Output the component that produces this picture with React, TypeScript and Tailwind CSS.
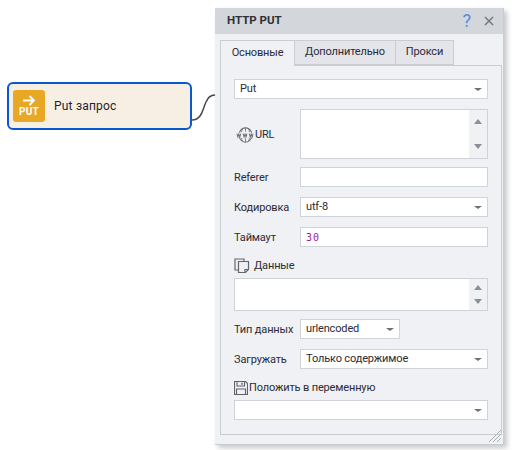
import type { ReactNode } from 'react';

const BOX_CLS = 'bg-white border border-[#cfd2d8] h-[20px] text-[11px] tracking-[-0.15px] text-[#2b2b33] flex items-center pl-[5px] pr-[5px]';
const LABEL_CLS = 'w-[66px] pt-[2px] text-[11px] tracking-[-0.15px] text-[#2b2b33] shrink-0 whitespace-nowrap';
const TAB_CLS = 'text-[11px] tracking-[-0.15px] text-[#2b2b33] flex items-center justify-center border-[#c9ccd2]';

function Caret() {
  return <span className="ml-auto w-0 h-0 border-x-[4px] border-x-transparent border-t-[3px] border-t-[#6e7078]" />;
}

function Select({ value, className = '' }: { value?: string; className?: string }) {
  return (
    <div className={`${BOX_CLS} ${className}`}>
      <span>{value}</span>
      <Caret />
    </div>
  );
}

function ScrollArea({ className = '', gap }: { className?: string; gap: string }) {
  return (
    <div className={`bg-white border border-[#cfd2d8] flex justify-end ${className}`}>
      <div className={`w-[18px] bg-[#f0f1f3] flex flex-col items-center justify-between ${gap}`}>
        <span className="w-0 h-0 border-x-[4px] border-x-transparent border-b-[5px] border-b-[#8d8f96]" />
        <span className="w-0 h-0 border-x-[4px] border-x-transparent border-t-[5px] border-t-[#8d8f96]" />
      </div>
    </div>
  );
}

function Row({ label, children, className = '' }: { label: string; children: ReactNode; className?: string }) {
  return (
    <div className={`flex items-center ${className}`}>
      <span className={LABEL_CLS}>{label}</span>
      {children}
    </div>
  );
}

function WwwIcon() {
  return (
    <svg width="19" height="18" viewBox="0 0 20 18" fill="none" stroke="#6f7278" className="shrink-0">
      <path d="M3.500 6.500C5 3 7.500 1.500 10 1.500s5 1.500 6.500 5M3.500 11.500C5 15 7.500 16.500 10 16.500s5-1.500 6.500-5" strokeWidth="1.200" />
      <path d="M10 1.500v4M10 12.500v4M7 2.500C6.300 3.500 6 4.500 5.800 6M13 2.500c.7 1 1 2 1.200 3.500M7 15.500c-.7-1-1-2-1.200-3.500M13 15.500c.7-1 1-2 1.200-3.500" strokeWidth="0.900" />
      <path d="M1 7.500l1 3.500 1-3 1 3 1-3.500M7.500 7.500l1 3.500 1-3 1 3 1-3.500M14 7.500l1 3.500 1-3 1 3 1-3.500" strokeWidth="1.100" />
    </svg>
  );
}

function PagesIcon() {
  return (
    <svg width="16" height="16" viewBox="0 0 16 16" fill="none" stroke="#63666c" strokeWidth="1.200" className="shrink-0">
      <path d="M10 3V1H1v11h3" />
      <path d="M4.500 3.500h10v8l-3 3h-7z" fill="#eef0f4" />
      <path d="M14 11.500h-3v3" />
    </svg>
  );
}

function SaveIcon() {
  return (
    <svg width="14" height="14" viewBox="0 0 14 14" fill="none" stroke="#5f6268" strokeWidth="1.100" className="shrink-0">
      <path d="M.5.500h11l2 2v11H.5z" />
      <path d="M3 .500v4.500h7.500V.500" />
      <path d="M2.500 13.500V8h9v5.500" />
      <path d="M8 1.800v2" strokeWidth="1.400" />
    </svg>
  );
}

export default function App() {
  return (
    <div className="w-[516px] h-[450px] bg-white flex items-start overflow-hidden font-['Roboto',sans-serif]">
      {/* Action node */}
      <div className="mt-[82px] ml-[7px] w-[185px] h-[48px] rounded-[6px] border-2 border-[#0a58d0] bg-[#f8efe4] flex items-center pl-[4px] shrink-0">
        <div className="w-[32px] h-[32px] rounded-[3px] bg-[#e8a826] flex flex-col items-center justify-center text-white">
          <svg width="14" height="11" viewBox="0 0 14 11" fill="none" stroke="white" strokeWidth="1.800" className="mt-[1px]">
            <path d="M1 5.500h11M7.500 1 12 5.500 7.500 10" />
          </svg>
          <span className="text-[10px] font-bold leading-[12px] tracking-[0.3px]">PUT</span>
        </div>
        <span className="ml-[9px] text-[12px] tracking-[0.2px] text-[#1e1e2c] -mt-[1px]">Put запрос</span>
      </div>

      {/* Connector */}
      <svg width="23" height="30" viewBox="0 0 23 30" fill="none" className="mt-[94px] shrink-0">
        <path d="M0 26C10 26 11 14 14 8 16 3 19 1 23 1" stroke="#45474d" strokeWidth="1.500" />
      </svg>

      {/* Dialog */}
      <div className="mt-[8px] w-[289px] h-[437px] bg-[#f0f1f5] border-r border-b border-[#c9ccd2] shadow-[3px_3px_5px_rgba(0,0,0,0.22)] flex flex-col shrink-0 relative">
        <div className="h-[26px] bg-[#d3d6da] flex items-center pl-[12px] pr-[9px] shrink-0">
          <span className="text-[11.500px] font-bold text-[#2d3038]">HTTP PUT</span>
          <span className="ml-auto text-[18px] leading-none text-[#4f8de0]">?</span>
          <svg width="10" height="10" viewBox="0 0 10 10" stroke="#757980" strokeWidth="1.500" className="ml-[13px]">
            <path d="M1 1l8 8M9 1l-8 8" />
          </svg>
        </div>

        <div className="flex pl-[5px] mt-[6px] h-[26px] relative z-10 shrink-0">
          <div className={`${TAB_CLS} w-[75px] h-[26px] bg-[#f0f1f5] border border-b-0`}>Основные</div>
          <div className={`${TAB_CLS} w-[101px] h-[25px] bg-[#e4e5ea] border border-l-0`}>Дополнительно</div>
          <div className={`${TAB_CLS} w-[58px] h-[25px] bg-[#e4e5ea] border border-l-0`}>Прокси</div>
        </div>

        <div className="mx-[5px] -mt-px w-[282px] h-[370px] border border-[#c9ccd2] pt-[13px] px-[13px]">
          <Select value="Put" className="w-[254px]" />
          <Row label="" className="mt-[10px] relative">
            <ScrollArea className="w-[188px] h-[50px]" gap="py-[9px]" />
            <span className="absolute left-[2px] top-[17px] flex items-center text-[11px] tracking-[-0.15px] text-[#2b2b33]">
              <WwwIcon />
              URL
            </span>
          </Row>
          <Row label="Referer" className="mt-[8px]">
            <div className={`${BOX_CLS} w-[188px]`} />
          </Row>
          <Row label="Кодировка" className="mt-[10px]">
            <Select value="utf-8" className="w-[188px]" />
          </Row>
          <Row label="Таймаут" className="mt-[10px]">
            <div className={`${BOX_CLS} w-[188px]`}>
              <span className="font-['DejaVu_Sans_Mono',monospace] text-[10px] tracking-[1px] text-[#a0209a]">30</span>
            </div>
          </Row>
          <div className="flex items-center gap-[4px] mt-[11px] h-[16px] text-[11px] tracking-[-0.15px] text-[#2b2b33]">
            <PagesIcon />
            Данные
          </div>
          <ScrollArea className="w-[254px] h-[33px] mt-[4px]" gap="py-[6px]" />
          <Row label="Тип данных" className="mt-[8px]">
            <Select value="urlencoded" className="w-[100px]" />
          </Row>
          <Row label="Загружать" className="mt-[10px]">
            <Select value="Только содержимое" className="w-[188px]" />
          </Row>
          <div className="flex items-center gap-px mt-[11px] h-[16px] text-[11px] tracking-[-0.15px] text-[#2b2b33]">
            <SaveIcon />
            Положить в переменную
          </div>
          <Select className="w-[254px] mt-[4px]" />
        </div>

        {/* Resize grip */}
        <svg width="14" height="14" viewBox="0 0 14 14" stroke="#a9acb2" className="absolute right-[1px] bottom-[1px]">
          <path d="M1 13 13 1M5 13l8-8M9 13l4-4" />
        </svg>
      </div>
    </div>
  );
}
